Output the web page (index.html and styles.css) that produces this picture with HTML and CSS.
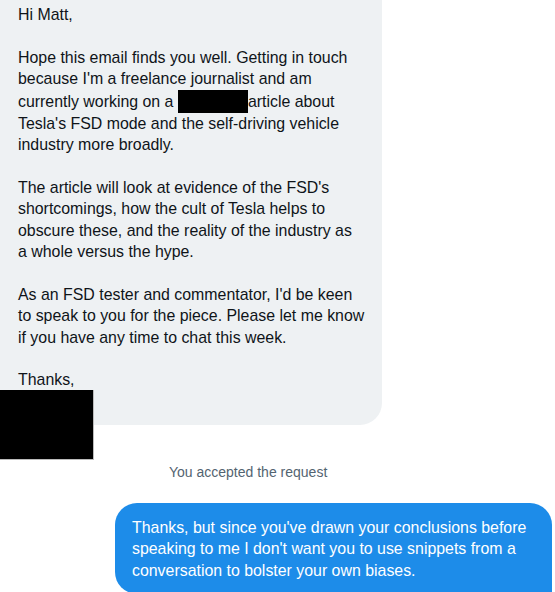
FILE: index.html
```html
<!DOCTYPE html>
<html>
<head>
<meta charset="utf-8">
<link rel="stylesheet" href="styles.css">
</head>
<body>
<div class="thread">
  <div class="received">
    <div class="bubble-in">
      <p>Hi Matt,</p>
      <p>Hope this email finds you well. Getting in touch<br>because I'm a freelance journalist and am<br>currently working on a <span class="redact"></span>article about<br>Tesla's FSD mode and the self-driving vehicle<br>industry more broadly.</p>
      <p>The article will look at evidence of the FSD's<br>shortcomings, how the cult of Tesla helps to<br>obscure these, and the reality of the industry as<br>a whole versus the hype.</p>
      <p>As an FSD tester and commentator, I'd be keen<br>to speak to you for the piece. Please let me know<br>if you have any time to chat this week.</p>
      <p>Thanks,</p>
    </div>
    <div class="redact-sign"></div>
  </div>
  <div class="status">You accepted the request</div>
  <div class="bubble-out">Thanks, but since you've drawn your conclusions before<br>speaking to me I don't want you to use snippets from a<br>conversation to bolster your own biases.</div>
</div>
</body>
</html>
```
FILE: styles.css
```css
html, body {
  margin: 0;
  padding: 0;
  background: #ffffff;
}
body {
  font-family: "Liberation Sans", Arial, sans-serif;
  overflow: hidden;
}
.thread {
  width: 555px;
}
.received {
  position: relative;
}
.bubble-in {
  width: 382px;
  box-sizing: border-box;
  background: #eef1f3;
  color: #0f1419;
  font-size: 15.9px;
  line-height: 21.4px;
  padding: 4px 4px 34px 18px;
  border-radius: 0 0 22px 0;
  white-space: nowrap;
}
.bubble-in p {
  margin: 0 0 21.4px 0;
}
.bubble-in p:last-child {
  margin-bottom: 0;
}
.redact {
  display: inline-block;
  width: 70px;
  height: 23px;
  background: #000;
  vertical-align: -6px;
}
.redact-sign {
  position: absolute;
  left: 0;
  top: 390px;
  width: 94px;
  height: 70px;
  background: #000;
  border-right: 1px solid #bbb;
  border-bottom: 1px solid #bbb;
  box-sizing: border-box;
}
.status {
  margin-top: 38px;
  padding-left: 169px;
  font-size: 14px;
  line-height: 18px;
  color: #536471;
}
.bubble-out {
  margin: 22px 3px 0 115px;
  background: #1d8ce9;
  color: #ffffff;
  font-size: 15.9px;
  line-height: 21.6px;
  padding: 14px 10px 12px 17px;
  border-radius: 22px 22px 0 22px;
  white-space: nowrap;
}
```
